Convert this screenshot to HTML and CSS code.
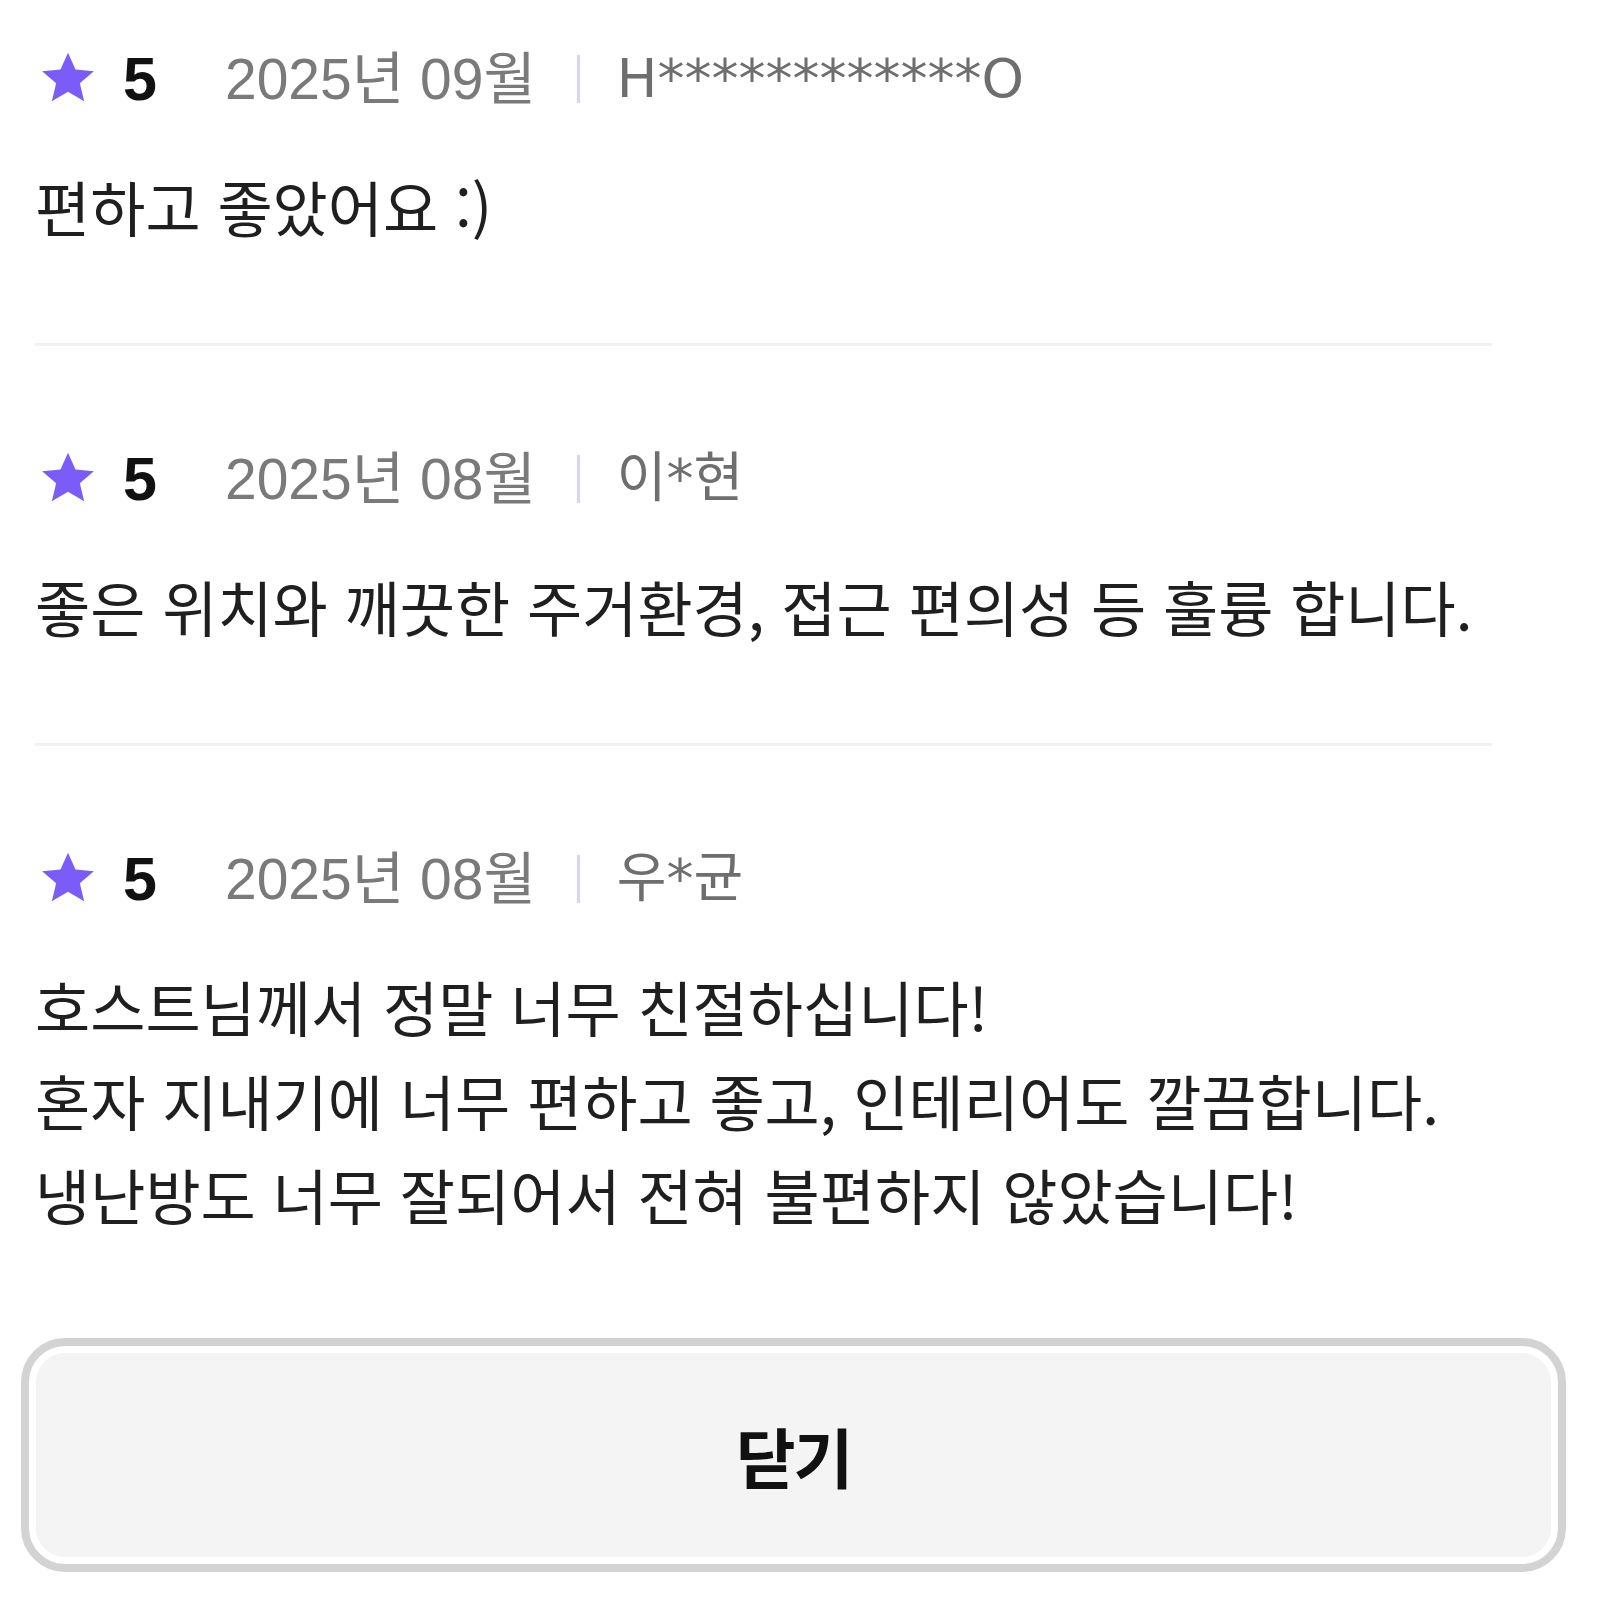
FILE: index.html
```html
<!DOCTYPE html>
<html lang="ko">
<head>
<meta charset="utf-8">
<title>리뷰</title>
<link rel="stylesheet" href="styles.css">
</head>
<body>
<div class="reviews">
  <article class="review">
    <div class="review-head">
      <svg class="star" viewBox="0 0 24 23" aria-hidden="true"><path d="M12 0.6l3.1 7 7.6 0.7-5.8 5 1.8 7.4L12 16.8l-6.7 3.9 1.8-7.4-5.8-5 7.6-0.7z"/></svg>
      <span class="score">5</span>
      <span class="date">2025년 09월</span>
      <span class="sep"></span>
      <span class="name">H************O</span>
    </div>
    <p class="text">편하고 좋았어요 :)</p>
  </article>
  <article class="review">
    <div class="review-head">
      <svg class="star" viewBox="0 0 24 23" aria-hidden="true"><path d="M12 0.6l3.1 7 7.6 0.7-5.8 5 1.8 7.4L12 16.8l-6.7 3.9 1.8-7.4-5.8-5 7.6-0.7z"/></svg>
      <span class="score">5</span>
      <span class="date">2025년 08월</span>
      <span class="sep"></span>
      <span class="name">이*현</span>
    </div>
    <p class="text">좋은 위치와 깨끗한 주거환경, 접근 편의성 등 훌륭 합니다.</p>
  </article>
  <article class="review">
    <div class="review-head">
      <svg class="star" viewBox="0 0 24 23" aria-hidden="true"><path d="M12 0.6l3.1 7 7.6 0.7-5.8 5 1.8 7.4L12 16.8l-6.7 3.9 1.8-7.4-5.8-5 7.6-0.7z"/></svg>
      <span class="score">5</span>
      <span class="date">2025년 08월</span>
      <span class="sep"></span>
      <span class="name">우*균</span>
    </div>
    <p class="text">호스트님께서 정말 너무 친절하십니다!<br>혼자 지내기에 너무 편하고 좋고, 인테리어도 깔끔합니다.<br>냉난방도 너무 잘되어서 전혀 불편하지 않았습니다!</p>
  </article>
</div>
<div class="actions">
  <button class="close" type="button">닫기</button>
</div>
</body>
</html>
```
FILE: styles.css
```css
html, body {
  margin: 0;
  padding: 0;
  background: #ffffff;
}

body {
  font-family: "Liberation Sans", "Noto Sans CJK KR", sans-serif;
  color: #1f1f1f;
}

.reviews {
  margin: 0 108px 0 35px;
}

.review {
  padding: 103px 0 90px;
  border-bottom: 3px solid #f1f1f1;
}

.review:first-child {
  padding-top: 49px;
}

.review:last-child {
  border-bottom: none;
}

.review-head {
  display: flex;
  align-items: center;
  height: 60px;
}

.star {
  width: 58px;
  height: 56px;
  margin-left: 4px;
  fill: #7b5cf7;
  flex: none;
}

.score {
  margin-left: 26px;
  font-size: 61px;
  font-weight: 700;
  color: #111111;
  line-height: 1;
}

.date {
  margin-left: 68px;
  font-size: 57px;
  color: #7a7a7a;
  line-height: 1;
}

.sep {
  width: 3px;
  height: 48px;
  margin-left: 41px;
  background: #d9d2fc;
  flex: none;
}

.name {
  margin-left: 37px;
  font-family: "DejaVu Sans", "Noto Sans CJK KR", sans-serif;
  font-size: 54px;
  color: #6e6e6e;
  line-height: 1;
}

.text {
  margin: 50px 0 0;
  font-family: "Noto Sans CJK KR", sans-serif;
  font-size: 60px;
  line-height: 94px;
  letter-spacing: 0;
  color: #1f1f1f;
}

.actions {
  padding: 7px 34px 0 21px;
}

.close {
  display: block;
  width: 100%;
  height: 234px;
  box-sizing: border-box;
  border: 8px solid #d3d3d3;
  border-radius: 44px;
  background: #f4f4f4;
  box-shadow: inset 0 0 0 7px #ffffff;
  font-family: "Noto Sans CJK KR", sans-serif;
  font-size: 65px;
  font-weight: 700;
  letter-spacing: -2px;
  color: #111111;
  padding: 0;
}
```
